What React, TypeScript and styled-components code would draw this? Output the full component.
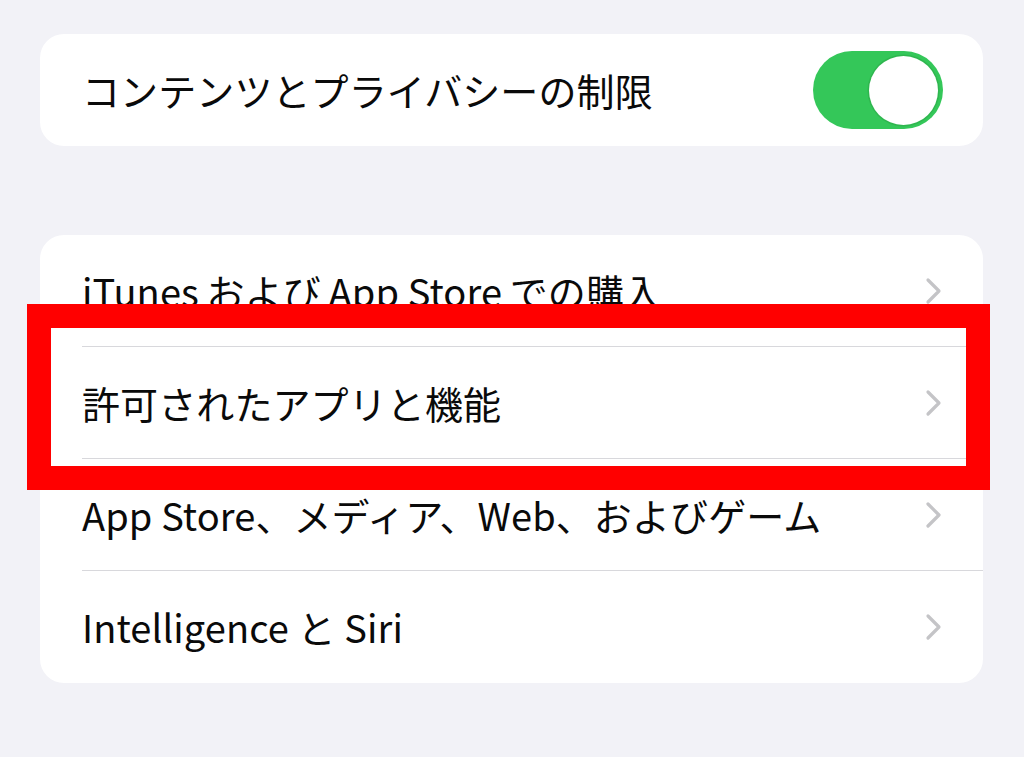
import React from "react";
import styled, { createGlobalStyle } from "styled-components";

const GlobalStyle = createGlobalStyle`
  html, body {
    margin: 0;
    padding: 0;
    background: #f2f2f7;
  }
  body {
    font-family: "Noto Sans CJK JP", "Noto Sans", "Liberation Sans", sans-serif;
    color: #000;
  }
`;

const Page = styled.div`
  position: relative;
  width: 1024px;
  height: 757px;
  box-sizing: border-box;
  padding: 34px 41px 0 40px;
  display: flex;
  flex-direction: column;
  gap: 89px;
  overflow: hidden;
`;

const Card = styled.div`
  background: #ffffff;
  border-radius: 24px;
  overflow: hidden;
`;

const Row = styled.div<{ $height?: number; $divider?: boolean }>`
  position: relative;
  display: flex;
  align-items: center;
  justify-content: space-between;
  height: ${(p) => p.$height ?? 112}px;
  padding: 0 40px 0 42px;
  box-sizing: border-box;

  &::after {
    content: "";
    display: ${(p) => (p.$divider ? "block" : "none")};
    position: absolute;
    left: 42px;
    right: 0;
    bottom: 0;
    height: 1px;
    background: #d8d8dc;
  }
`;

const Label = styled.span`
  font-size: 38px;
  line-height: 1;
  letter-spacing: 0.1px;
  white-space: nowrap;
  color: #0a0a0a;
`;

const Toggle = styled.div`
  width: 130px;
  height: 78px;
  border-radius: 39px;
  background: #34c759;
  display: flex;
  align-items: center;
  justify-content: flex-end;
  padding: 0 5px;
  box-sizing: border-box;
`;

const Knob = styled.div`
  width: 69px;
  height: 69px;
  border-radius: 50%;
  background: #ffffff;
  box-shadow: 0 0 0 1.5px #2fb64f;
`;

const Highlight = styled.div`
  position: absolute;
  left: 27px;
  top: 304px;
  width: 963px;
  height: 186px;
  box-sizing: border-box;
  border: 24px solid #ff0000;
  pointer-events: none;
`;

const Chevron = () => (
  <svg width="18" height="28" viewBox="0 0 18 28" fill="none">
    <path
      d="M3 3 L14 14 L3 25"
      stroke="#c4c4c7"
      strokeWidth="3.2"
      strokeLinecap="round"
      strokeLinejoin="round"
    />
  </svg>
);

const items = [
  "iTunes\u2009および\u2009App Store\u2009での購入",
  "許可されたアプリと機能",
  "App Store、メディア、Web、およびゲーム",
  "Intelligence と Siri",
];

export default function App() {
  return (
    <>
      <GlobalStyle />
      <Page>
        <Card>
          <Row>
            <Label>コンテンツとプライバシーの制限</Label>
            <Toggle>
              <Knob />
            </Toggle>
          </Row>
        </Card>
        <Card>
          {items.map((text, i) => (
            <Row key={text} $divider={i < items.length - 1}>
              <Label>{text}</Label>
              <Chevron />
            </Row>
          ))}
        </Card>
        <Highlight />
      </Page>
    </>
  );
}
